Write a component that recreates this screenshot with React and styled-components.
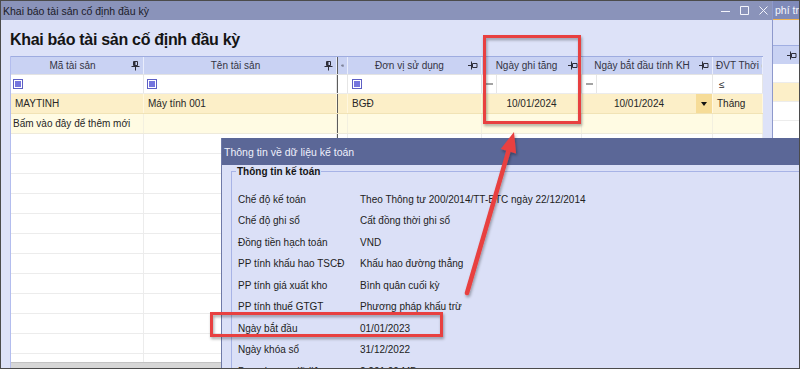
import React from 'react';
import styled, { createGlobalStyle } from 'styled-components';

const GlobalStyle = createGlobalStyle`
  html, body {
    margin: 0;
    padding: 0;
    background: #dde2f8;
  }
  body {
    width: 800px;
    height: 369px;
    overflow: hidden;
    font-family: "Liberation Sans", Arial, sans-serif;
    font-size: 10px;
    color: #222;
  }
  * {
    box-sizing: border-box;
  }
`;

// column widths of the asset grid
const COLS = '133px 193px 11px 134px 100px 131px 50px';

const Screen = styled.div`
  position: relative;
  width: 800px;
  height: 369px;
  border: 1px solid #4b4b4b;
  display: flex;
  overflow: hidden;
  background: #dde2f8;
`;

const MainWindow = styled.div`
  width: 772px;
  display: flex;
  flex-direction: column;
  border-right: 1px solid #8e99cc;
`;

const TitleBar = styled.div`
  height: 19px;
  flex: none;
  display: flex;
  align-items: center;
  padding: 0 4px 0 2px;
  background: #8a93ba;
  color: #1b1b28;
  font-size: 10.5px;
`;

const Controls = styled.div`
  margin-left: auto;
  display: flex;
  align-items: center;
  gap: 10px;
  color: #f3f4fb;
`;

const Body = styled.div`
  flex: 1;
  min-height: 0;
  display: flex;
  flex-direction: column;
  padding-left: 9px;
`;

const Heading = styled.h1`
  margin: 0;
  height: 36px;
  flex: none;
  display: flex;
  align-items: center;
  padding-top: 3px;
  font-size: 16px;
  letter-spacing: -0.3px;
  font-weight: bold;
  color: #141414;
`;

const Grid = styled.div`
  width: 753px;
  flex: 1;
  min-height: 0;
  display: flex;
  flex-direction: column;
  background: #fff;
  border-left: 1px solid #b3bdee;
`;

const Row = styled.div`
  display: grid;
  grid-template-columns: ${COLS};
  flex: none;
  height: ${p => p.$h || 20}px;
  background: ${p => p.$bg || '#fff'};
  border-bottom: 1px solid ${p => p.$line || '#ececec'};
  border-top: ${p => (p.$top ? `1px solid ${p.$top}` : 'none')};
`;

const Cell = styled.div`
  display: flex;
  align-items: center;
  justify-content: ${p => p.$align || 'flex-start'};
  padding: 0 ${p => p.$pad ?? 4}px;
  border-right: 1px solid ${p => p.$line || '#e6e6e6'};
  border-left: ${p => (p.$split ? '1px solid #5c5c5c' : 'none')};
  overflow: hidden;
  white-space: nowrap;
  color: #262626;
`;

const HeadCell = styled(Cell)`
  background: #c9d2f3;
  color: #343444;
  border-right-color: #e9edfc;
  padding: 0 3px;
`;

const HeadText = styled.span`
  flex: 1;
  text-align: center;
`;

const Check = styled.span`
  width: 10px;
  height: 10px;
  border: 1px solid #5d5fc4;
  padding: 1px;
  background: #fff;
  &::after {
    content: '';
    display: block;
    width: 100%;
    height: 100%;
    background: #7475de;
  }
`;

const OpBox = styled.span`
  width: 15px;
  height: 100%;
  flex: none;
  display: flex;
  align-items: center;
  justify-content: center;
  border-right: 1px solid #e6e6e6;
  &::after {
    content: '';
    width: 7px;
    height: 2px;
    background: #a3a3a3;
  }
`;

const CellText = styled.span`
  flex: 1;
  text-align: center;
`;

const DropButton = styled.span`
  width: 16px;
  height: 100%;
  flex: none;
  display: flex;
  align-items: center;
  justify-content: center;
  background: #f6dc98;
  &::after {
    content: '';
    border-left: 3.5px solid transparent;
    border-right: 3.5px solid transparent;
    border-top: 4px solid #111;
  }
`;

const Rows = styled.div`
  flex: 1;
  min-height: 0;
  overflow: hidden;
`;

const ScrollStrip = styled.div`
  height: 6px;
  flex: none;
  background: #d6d6d6;
  border-top: 1px solid #c2c2c2;
`;

const SideWindow = styled.div`
  flex: 1;
  min-width: 0;
  display: flex;
  flex-direction: column;
  background: #dde2f8;
`;

const SideTitle = styled.div`
  height: 19px;
  flex: none;
  padding-left: 2px;
  display: flex;
  align-items: center;
  background: #7f8ab9;
  border-bottom: 1px solid #f0b24c;
  color: #f5f6fc;
  font-size: 10.5px;
  white-space: nowrap;
  overflow: hidden;
`;

const SideSpacer = styled.div`
  height: 25px;
  flex: none;
`;

const SideHead = styled.div`
  height: 19px;
  flex: none;
  display: flex;
  align-items: center;
  justify-content: flex-end;
  padding-right: 2px;
  background: #c9d2f3;
  border-top: 1px solid #a0aee2;
`;

const SideRow = styled.div`
  height: 19px;
  flex: none;
  background: ${p => p.$bg || '#fff'};
  border-bottom: 1px solid #ececec;
`;

const Dialog = styled.div`
  position: absolute;
  left: 220px;
  top: 137px;
  width: 600px;
  height: 250px;
  z-index: 2;
  display: flex;
  flex-direction: column;
  background: #dbe0f7;
  border-left: 1px solid #6f7aa8;
`;

const DialogTitle = styled.div`
  height: 27px;
  flex: none;
  display: flex;
  align-items: center;
  padding-left: 2px;
  background: #5b6797;
  color: #eef0fb;
  font-size: 10.5px;
`;

const DialogBody = styled.div`
  flex: 1;
  padding: 1px 0 0 9px;
  display: flex;
  flex-direction: column;
`;

const Group = styled.fieldset`
  flex: 1;
  margin: 0;
  padding: 11.5px 0 0 4px;
  border: 1px solid #a7b3e6;
  border-right: none;
  border-bottom: none;
`;

const Legend = styled.legend`
  padding: 0 1px;
  font-size: 10px;
  font-weight: bold;
  color: #151515;
`;

const InfoRow = styled.div`
  display: grid;
  grid-template-columns: 122px 1fr;
  align-items: center;
  height: 21.5px;
  padding-left: 2px;
  color: #222;
  white-space: nowrap;
`;

const Overlay = styled.svg`
  position: absolute;
  left: -1px;
  top: -1px;
  z-index: 3;
  pointer-events: none;
`;

const PinV = () => (
  <svg width="9" height="10" viewBox="0 0 9 10">
    <path d="M2.5 0.5h4v4h-4z M0.5 5.5h8 M4.5 5.5v4" stroke="#2e2e3a" fill="none" />
    <path d="M3 1h1.5v3h-1.5z" fill="#2e2e3a" />
  </svg>
);

const PinH = () => (
  <svg width="10" height="9" viewBox="0 0 10 9">
    <path d="M0 4.5h3.5 M3.5 0.5v8 M4.5 2.5h4.5v4h-4.5z" stroke="#2e2e3a" fill="none" />
    <path d="M5 6h3.5v0.8h-3.5z" fill="#2e2e3a" />
  </svg>
);

const WinIcon = ({ kind }) => (
  <svg width="9" height="9" viewBox="0 0 9 9">
    {kind === 'min' && <path d="M0 5.5h9" stroke="currentColor" />}
    {kind === 'max' && <path d="M0.5 0.5h8v8h-8z" stroke="currentColor" fill="none" />}
    {kind === 'close' && <path d="M0.5 0.5l8 8 M8.5 0.5l-8 8" stroke="currentColor" />}
  </svg>
);

const info = [
  ['Chế độ kế toán', 'Theo Thông tư 200/2014/TT-BTC ngày 22/12/2014'],
  ['Chế độ ghi sổ', 'Cất đồng thời ghi sổ'],
  ['Đồng tiền hạch toán', 'VND'],
  ['PP tính khấu hao TSCĐ', 'Khấu hao đường thẳng'],
  ['PP tính giá xuất kho', 'Bình quân cuối kỳ'],
  ['PP tính thuế GTGT', 'Phương pháp khấu trừ'],
  ['Ngày bắt đầu', '01/01/2023'],
  ['Ngày khóa sổ', '31/12/2022'],
  ['Dung lượng dữ liệu', '2,201.00 MB'],
];

const EmptyRow = () => (
  <Row>
    <Cell $line="#ececec" />
    <Cell $line="#ececec" />
    <Cell $split $line="#ececec" />
    <Cell $line="#ececec" />
    <Cell $line="#ececec" />
    <Cell $line="#ececec" />
    <Cell $line="#ececec" />
  </Row>
);

// tail -> tip of the annotation arrow
const arrow = { x1: 467, y1: 293, x2: 514, y2: 132 };
const arrowHead = (() => {
  const dx = arrow.x2 - arrow.x1;
  const dy = arrow.y2 - arrow.y1;
  const len = Math.hypot(dx, dy);
  const ux = dx / len;
  const uy = dy / len;
  const bx = arrow.x2 - ux * 20;
  const by = arrow.y2 - uy * 20;
  return {
    base: [bx, by],
    points: `${arrow.x2},${arrow.y2} ${bx - uy * 8},${by + ux * 8} ${bx + uy * 8},${by - ux * 8}`,
  };
})();

export default function App() {
  return (
    <>
      <GlobalStyle />
      <Screen>
        <MainWindow>
          <TitleBar>
            Khai báo tài sản cố định đầu kỳ
            <Controls>
              <WinIcon kind="min" />
              <WinIcon kind="max" />
              <WinIcon kind="close" />
            </Controls>
          </TitleBar>
          <Body>
            <Heading>Khai báo tài sản cố định đầu kỳ</Heading>
            <Grid>
              <Row $h={19} $top="#9eace0" $line="#e3e3e3">
                <HeadCell><HeadText>Mã tài sản</HeadText><PinV /></HeadCell>
                <HeadCell><HeadText>Tên tài sản</HeadText><PinV /></HeadCell>
                <HeadCell $split $pad={0}><PinH /></HeadCell>
                <HeadCell><HeadText>Đơn vị sử dụng</HeadText><PinH /></HeadCell>
                <HeadCell><HeadText>Ngày ghi tăng</HeadText><PinH /></HeadCell>
                <HeadCell><HeadText>Ngày bắt đầu tính KH</HeadText><PinH /></HeadCell>
                <HeadCell>ĐVT Thời gian</HeadCell>
              </Row>
              <Row $h={19}>
                <Cell $pad={2}><Check /></Cell>
                <Cell $pad={3}><Check /></Cell>
                <Cell $split />
                <Cell $pad={4}><Check /></Cell>
                <Cell $pad={0}><OpBox /></Cell>
                <Cell $pad={0}><OpBox /></Cell>
                <Cell $pad={6}>≤</Cell>
              </Row>
              <Row $bg="#fcefc8" $line="#f1e3b6">
                <Cell $pad={4} $line="#fff7df">MAYTINH</Cell>
                <Cell $pad={4} $line="#fff7df">Máy tính 001</Cell>
                <Cell $split $line="#fff7df" />
                <Cell $pad={4} $line="#fff7df">BGĐ</Cell>
                <Cell $align="center" $line="#fff7df">10/01/2024</Cell>
                <Cell $pad={0} $line="#fff7df"><CellText>10/01/2024</CellText><DropButton /></Cell>
                <Cell $pad={4} $line="#fff7df">Tháng</Cell>
              </Row>
              <Row $bg="#fffbe3" $line="#eeeadb">
                <Cell $pad={2} $line="#f3f0e0">Bấm vào đây để thêm mới</Cell>
                <Cell $line="#f3f0e0" />
                <Cell $split $line="#f3f0e0" />
                <Cell $line="#f3f0e0" />
                <Cell $line="#f3f0e0" />
                <Cell $line="#f3f0e0" />
                <Cell $line="#f3f0e0" />
              </Row>
              <Rows>
                {Array.from({ length: 12 }, (_, i) => <EmptyRow key={i} />)}
              </Rows>
              <ScrollStrip />
            </Grid>
          </Body>
        </MainWindow>

        <SideWindow>
          <SideTitle>phí trả trước</SideTitle>
          <SideSpacer />
          <SideHead><PinH /></SideHead>
          <SideRow />
          <SideRow $bg="#fcefc8" />
          <SideRow />
          <SideRow />
        </SideWindow>

        <Dialog>
          <DialogTitle>Thông tin về dữ liệu kế toán</DialogTitle>
          <DialogBody>
            <Group>
              <Legend>Thông tin kế toán</Legend>
              {info.map(([label, value]) => (
                <InfoRow key={label}>
                  <span>{label}</span>
                  <span>{value}</span>
                </InfoRow>
              ))}
            </Group>
          </DialogBody>
        </Dialog>

        <Overlay width="800" height="369" viewBox="0 0 800 369">
          <defs>
            <filter id="shade" x="-10%" y="-10%" width="120%" height="130%">
              <feDropShadow dx="1" dy="2" stdDeviation="1.5" floodColor="#000" floodOpacity="0.35" />
            </filter>
          </defs>
          <g filter="url(#shade)" stroke="#e8403f" fill="none">
            <rect x="484.5" y="36.5" width="95" height="86" strokeWidth="3" />
            <rect x="211.5" y="313.5" width="230" height="22" strokeWidth="3" />
            <line
              x1={arrow.x1}
              y1={arrow.y1}
              x2={arrowHead.base[0]}
              y2={arrowHead.base[1]}
              strokeWidth="4.5"
              strokeLinecap="round"
            />
            <polygon points={arrowHead.points} fill="#e8403f" stroke="none" />
          </g>
        </Overlay>
      </Screen>
    </>
  );
}
